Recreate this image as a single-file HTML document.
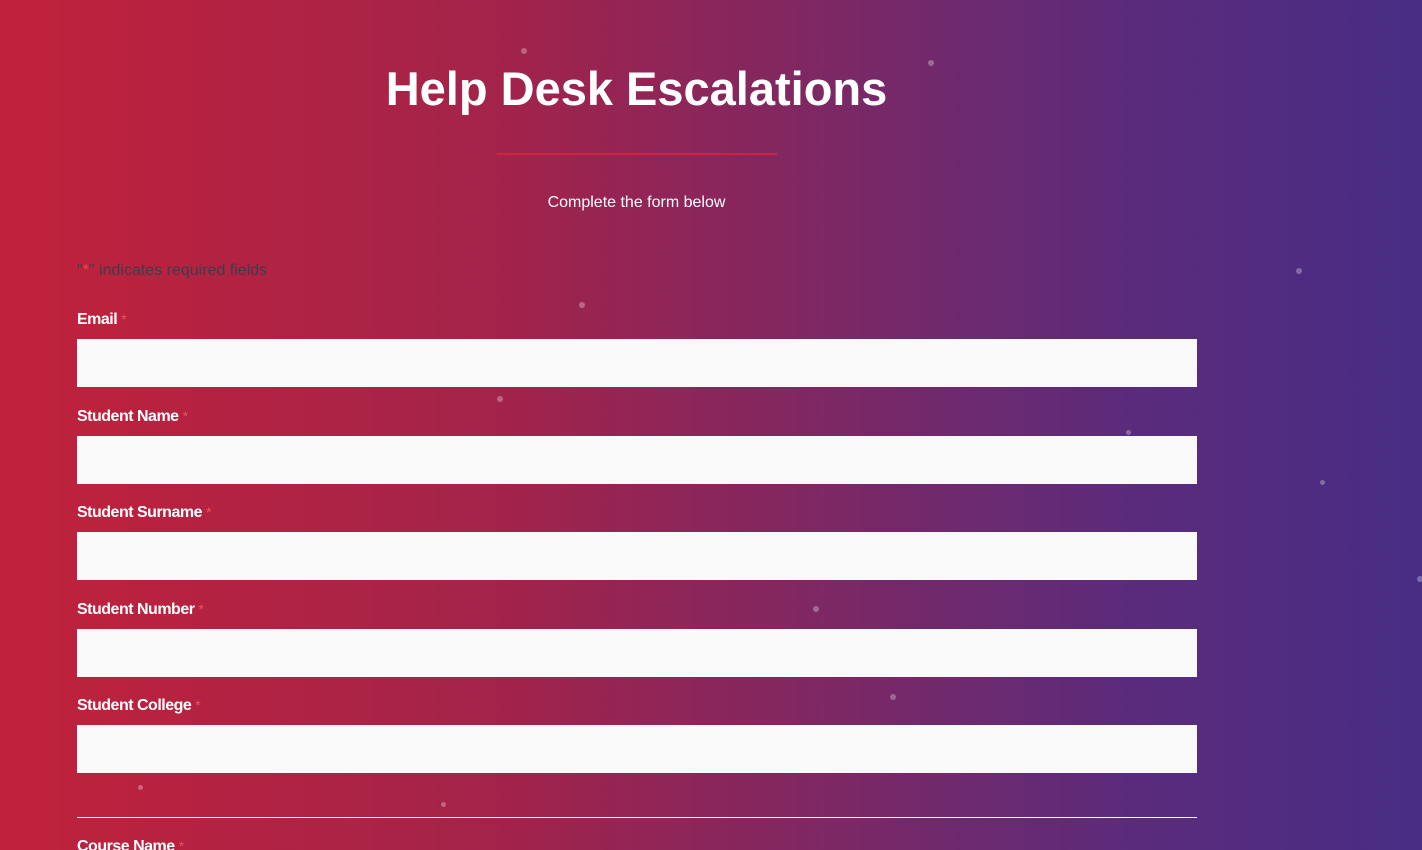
<!DOCTYPE html>
<html><head><meta charset="utf-8"><style>
html,body{margin:0;padding:0;width:1422px;height:850px;overflow:hidden}
body{background:linear-gradient(90deg,#c1223b 0%,#a3234a 35%,#7a2866 60%,#5a2b7c 80%,#482d85 100%);font-family:"Liberation Sans",sans-serif;position:relative}
h1{position:absolute;left:0;width:1273px;top:61px;margin:0;text-align:center;color:#fff;font-size:47px;font-weight:bold;letter-spacing:0}
.ul{position:absolute;left:497px;top:153px;width:280px;height:2px;background:#d4223a}
.sub{position:absolute;left:0;width:1273px;top:194px;text-align:center;color:#fff;font-size:16px}
.req{position:absolute;left:77px;top:262px;color:#3d3d4d;font-size:16px}
.req b{color:#e04a55;font-weight:normal}
.lab{position:absolute;left:77px;color:#fff;font-weight:bold;font-size:16px;letter-spacing:-0.5px}
.lab span{color:#f0505c;font-size:14px;margin-left:4px;font-weight:normal}
.in{position:absolute;left:77px;width:1120px;height:48px;background:#f9f9f9}
.hr{position:absolute;left:77px;top:817px;width:1120px;height:1px;background:#fff}
.d{position:absolute;border-radius:50%;background:rgba(255,255,255,.3)}
</style></head><body>
<div class="d" style="left:521px;top:48px;width:6px;height:6px"></div>
<div class="d" style="left:928px;top:60px;width:6px;height:6px"></div>
<div class="d" style="left:1296px;top:268px;width:6px;height:6px"></div>
<div class="d" style="left:579px;top:302px;width:6px;height:6px"></div>
<div class="d" style="left:497px;top:396px;width:6px;height:6px"></div>
<div class="d" style="left:813px;top:606px;width:6px;height:6px"></div>
<div class="d" style="left:890px;top:694px;width:6px;height:6px"></div>
<div class="d" style="left:1320px;top:480px;width:5px;height:5px"></div>
<div class="d" style="left:441px;top:802px;width:5px;height:5px"></div>
<div class="d" style="left:138px;top:785px;width:5px;height:5px"></div>
<div class="d" style="left:1417px;top:576px;width:6px;height:6px"></div>
<div class="d" style="left:1126px;top:430px;width:5px;height:5px"></div>
<h1>Help Desk Escalations</h1>
<div class="ul"></div>
<div class="sub">Complete the form below</div>
<div class="req">"<b>*</b>" indicates required fields</div>
<div class="lab" style="top:311px">Email<span>*</span></div>
<div class="in" style="top:339px"></div>
<div class="lab" style="top:408px">Student Name<span>*</span></div>
<div class="in" style="top:436px"></div>
<div class="lab" style="top:504px">Student Surname<span>*</span></div>
<div class="in" style="top:532px"></div>
<div class="lab" style="top:601px">Student Number<span>*</span></div>
<div class="in" style="top:629px"></div>
<div class="lab" style="top:697px">Student College<span>*</span></div>
<div class="in" style="top:725px"></div>
<div class="hr"></div>
<div class="lab" style="top:838px">Course Name<span>*</span></div>
</body></html>
